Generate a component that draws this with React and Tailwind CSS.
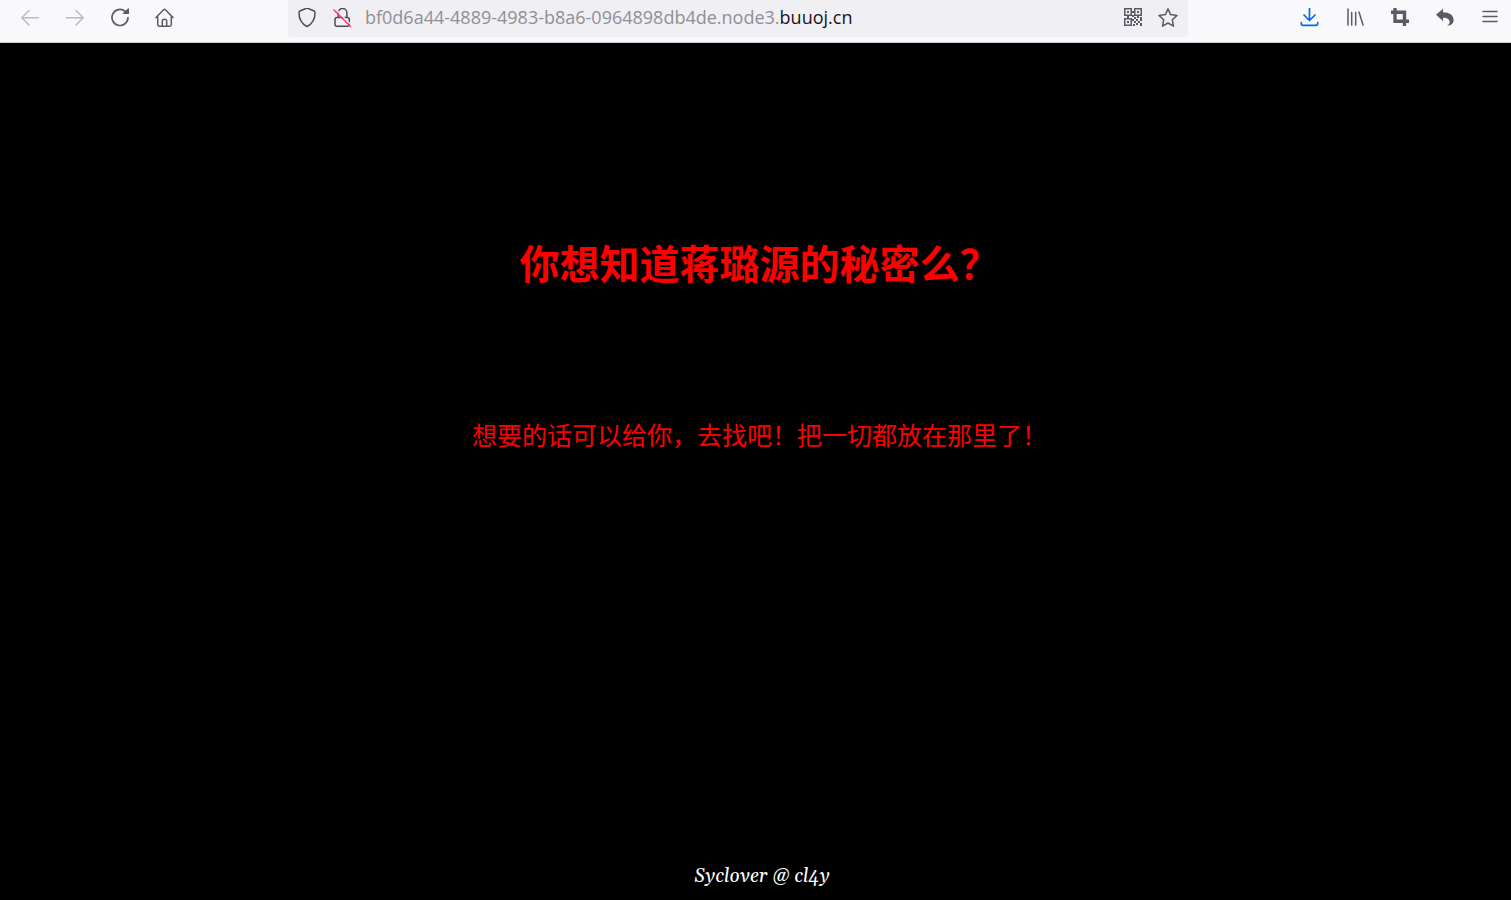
const IconButton = ({ label, className = 'text-[#5b5b66]', children }) => (
  <button type="button" aria-label={label} className={`h-9 w-5 flex items-center ${className}`}>
    <svg
      viewBox="0 0 20 20"
      className="w-5 h-5 shrink-0"
      fill="none"
      stroke="currentColor"
      strokeWidth="1.5"
      strokeLinecap="round"
      strokeLinejoin="round"
    >
      {children}
    </svg>
  </button>
);

const QrIcon = () => (
  <g fill="currentColor" stroke="none">
    <path fillRule="evenodd" d="M1 0h8v8H1zM2.5 1.5v5h5v-5zM11 0h8v8h-8zM12.5 1.5v5h5v-5zM1 10h8v8H1zM2.5 11.5v5h5v-5z" />
    <path d="M4 3h2v2H4zM14 3h2v2h-2zM4 13h2v2H4zM9 3h2v2H9zM9 7h2v2H9zM4 8h2v2H4zM14 8h2v2h-2zM11 9h2v2h-2zM17 9h2v2h-2zM13 11h2v2h-2zM9 11h2v2H9zM11 13h2v2h-2zM15 13h2v2h-2zM13 15h2v2h-2zM17 11h2v2h-2zM17 15h2v3h-2zM10 16h2v2h-2z" />
  </g>
);

const Toolbar = () => (
  <header className="flex items-start h-[43px] pl-5 pr-[11px] bg-[#f9f9fb] border-b border-[#ccccd0]">
    <nav className="flex gap-[25px]">
      <IconButton label="Back" className="text-[#bbbbc2]">
        <path d="M18.5 9.7H2M9 2.5L1.8 9.7L9 17" />
      </IconButton>
      <IconButton label="Forward" className="text-[#bbbbc2]">
        <path d="M1.5 9.7H18M11 2.5L18.2 9.7L11 17" />
      </IconButton>
      <IconButton label="Reload">
        <path strokeWidth="1.7" d="M18 9.5A8 8 0 1 1 15.2 3.4" />
        <path fill="currentColor" stroke="none" d="M19 0.8V6H13.2C12.8 6 12.6 5.6 12.9 5.3L18.3 0.3Q19 0 19 0.8Z" />
      </IconButton>
      <IconButton label="Home">
        <path d="M1 9.6L8.9 1.5Q9.5 0.9 10.1 1.5L18 9.6M2.7 8.5V16.6Q2.7 18.3 4.4 18.3H14.6Q16.3 18.3 16.3 16.6V8.5M7.3 18V13.2Q7.3 11.2 9.5 11.2Q11.7 11.2 11.7 13.2V18" />
      </IconButton>
    </nav>

    <div className="flex flex-1 items-start h-[37px] ml-[113px] mr-28 pl-[9px] pr-[10px] rounded-b bg-[#f0f0f4]">
      <IconButton label="Tracking protection" className="text-[#4c4c52]">
        <path d="M10 0L16.6 2.8Q18 3.4 18 4.9C18 10.5 16.5 15 10 18.5C3.5 15 2 10.5 2 4.9Q2 3.4 3.4 2.8Z" />
      </IconButton>
      <div className="ml-4 flex">
        <IconButton label="Connection not secure" className="text-[#4c4c52]">
          <path d="M5.3 9.2V4.8A4.3 4.3 0 0 1 13.9 4.8V9.2M4.5 9.4H14.3Q16.3 9.4 16.3 11.4V16.3Q16.3 18.3 14.3 18.3H4Q2 18.3 2 16.3V11.4Q2 9.4 4 9.4" />
          <path stroke="#f0f0f4" strokeWidth="1.2" d="M2.3 1L18.5 17.2" />
          <path stroke="#ff3b6b" d="M1 2L17.5 18.5" />
        </IconButton>
      </div>
      <p className="flex-1 ml-3 text-[18px] leading-[35px] font-['Open_Sans',sans-serif] text-[#8f8f96] whitespace-nowrap">
        bf0d6a44-4889-4983-b8a6-0964898db4de.node3.<span className="text-[#15141a]">buuoj.cn</span>
      </p>
      <div className="flex gap-[15px]">
        <IconButton label="QR code">
          <QrIcon />
        </IconButton>
        <IconButton label="Bookmark this page">
          <path d="M10 0.9L12.6 6.6L19 7.4L14.3 11.7L15.5 18.2L10 15L4.5 18.2L5.7 11.7L1 7.4L7.4 6.6Z" />
        </IconButton>
      </div>
    </div>

    <nav className="flex gap-[25px]">
      <IconButton label="Downloads" className="text-[#0a6be0]">
        <path strokeWidth="1.7" d="M9.5 0V12M4 7L9.5 12.5L15 7M1.3 14.5V15.5Q1.3 17.3 3.1 17.3H15.9Q17.7 17.3 17.7 15.5V14.5" />
      </IconButton>
      <IconButton label="Library">
        <path d="M3 1V17M6.7 4.5V17M10.7 4.5V17M14 4L18 17" />
      </IconButton>
      <IconButton label="Screenshot">
        <path strokeWidth="3.4" strokeLinecap="butt" strokeLinejoin="miter" d="M5 0V13.3H19M1 4.3H14.5V18" />
      </IconButton>
      <IconButton label="Undo">
        <path fill="currentColor" stroke="none" d="M1 6.8L8 0.7V4.2C14.5 4.2 18.6 7.2 18.6 12C18.6 15.2 16.5 17.5 12 17.8C14.8 16 15.2 13.8 14 12C12.9 10.3 11 9.8 8 9.8V13Z" />
      </IconButton>
      <IconButton label="Menu">
        <path d="M3 3.5H17M3 8.5H17M3 13.5H17" />
      </IconButton>
    </nav>
  </header>
);

const App = () => {
  return (
    <div className="flex flex-col min-h-screen bg-black">
      <Toolbar />
      <main className="flex-1 pl-2 text-center text-[#ff0000] font-['Noto_Sans_CJK_SC',sans-serif]">
        <h1 className="mt-[189px] text-[40px] leading-[60px] font-bold">
          你想知道蒋璐源的秘密么？
        </h1>
        <p className="mt-[122px] text-[25px] leading-[40px]">
          想要的话可以给你，去找吧！把一切都放在那里了！
        </p>
      </main>
      <footer className="pl-[13px] pb-2 text-center text-[19px] leading-8 italic text-white font-['Gelasio','Georgia','Liberation_Serif',serif]">
        Syclover @ cl4y
      </footer>
    </div>
  );
};

export default App;
